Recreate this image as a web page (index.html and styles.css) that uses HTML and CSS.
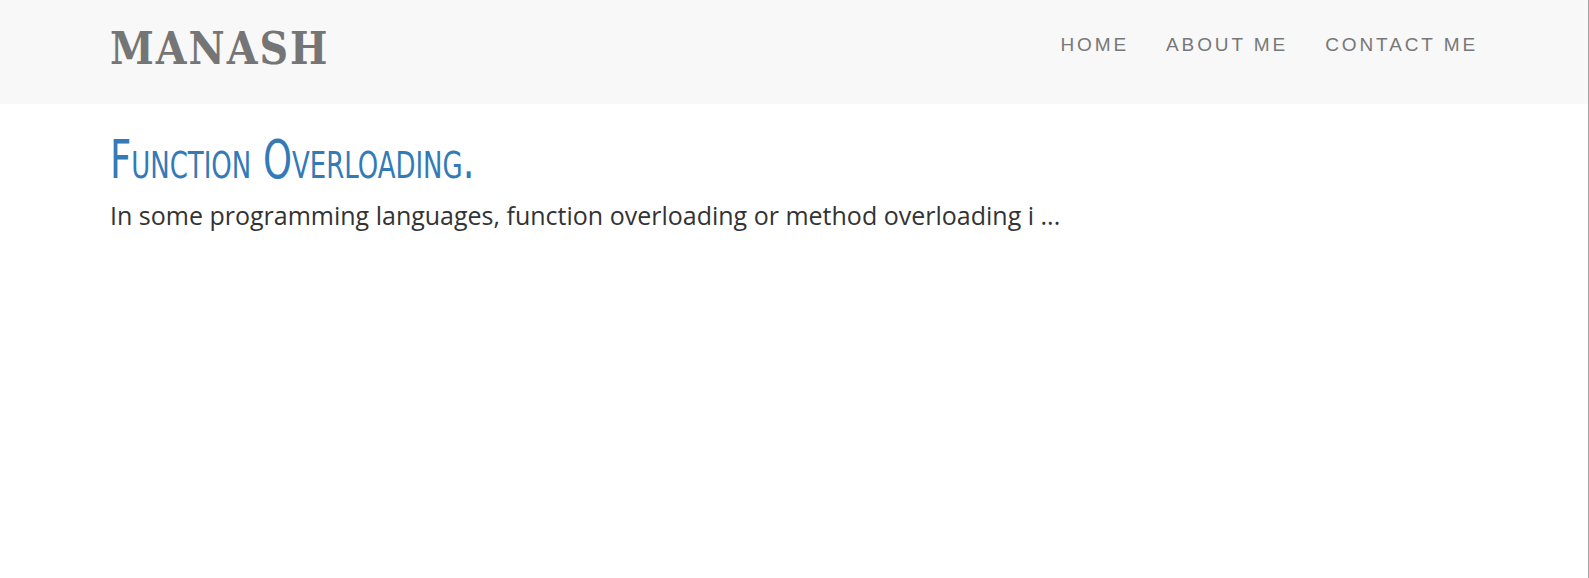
FILE: index.html
```html
<!DOCTYPE html>
<html>
<head>
<meta charset="utf-8">
<link rel="stylesheet" href="styles.css">
</head>
<body>
<header class="site-header">
  <div class="container header-inner">
    <a class="brand" href="#">MANASH</a>
    <nav class="nav">
      <a href="#">HOME</a>
      <a href="#">ABOUT ME</a>
      <a href="#">CONTACT ME</a>
    </nav>
  </div>
</header>
<main class="container content">
  <article class="post">
    <h2 class="post-title"><a href="#"><span>Function Overloading.</span></a></h2>
    <p class="post-excerpt">In some programming languages, function overloading or method overloading i ...</p>
  </article>
</main>
</body>
</html>
```

FILE: styles.css
```css
html {
  border-right: 1px solid #a4a4a4;
  min-height: 100%;
  box-sizing: border-box;
}
body {
  margin: 0;
  background: #fff;
  font-family: "Liberation Sans", Arial, sans-serif;
}
.container {
  padding: 0 110px;
}
.site-header {
  background: #f8f8f8;
  height: 104px;
}
.header-inner {
  display: flex;
  align-items: center;
  justify-content: space-between;
  height: 100%;
}
.brand {
  font-family: "DejaVu Serif Condensed", "DejaVu Serif", serif;
  font-weight: bold;
  font-size: 44px;
  letter-spacing: 2px;
  color: #757575;
  text-decoration: none;
  margin-top: -8px;
}
.nav {
  display: flex;
  gap: 37px;
  margin-top: -14px;
}
.nav a {
  font-family: "Liberation Sans", Arial, sans-serif;
  font-size: 19px;
  letter-spacing: 2.9px;
  color: #777;
  text-decoration: none;
}
.content {
  padding-top: 29px;
}
.post-title {
  margin: 0;
  font-weight: normal;
  line-height: 1;
}
.post-title a {
  color: #337ab7;
  text-decoration: none;
}
.post-title span {
  display: inline-block;
  font-family: "DejaVu Sans Condensed", "DejaVu Sans", sans-serif;
  font-variant: small-caps;
  font-size: 54px;
  transform: scaleX(0.76);
  transform-origin: left center;
}
.post-excerpt {
  margin: 11px 0 0;
  font-family: "Open Sans", "Lato", sans-serif;
  font-size: 25px;
  color: #333;
}
```
